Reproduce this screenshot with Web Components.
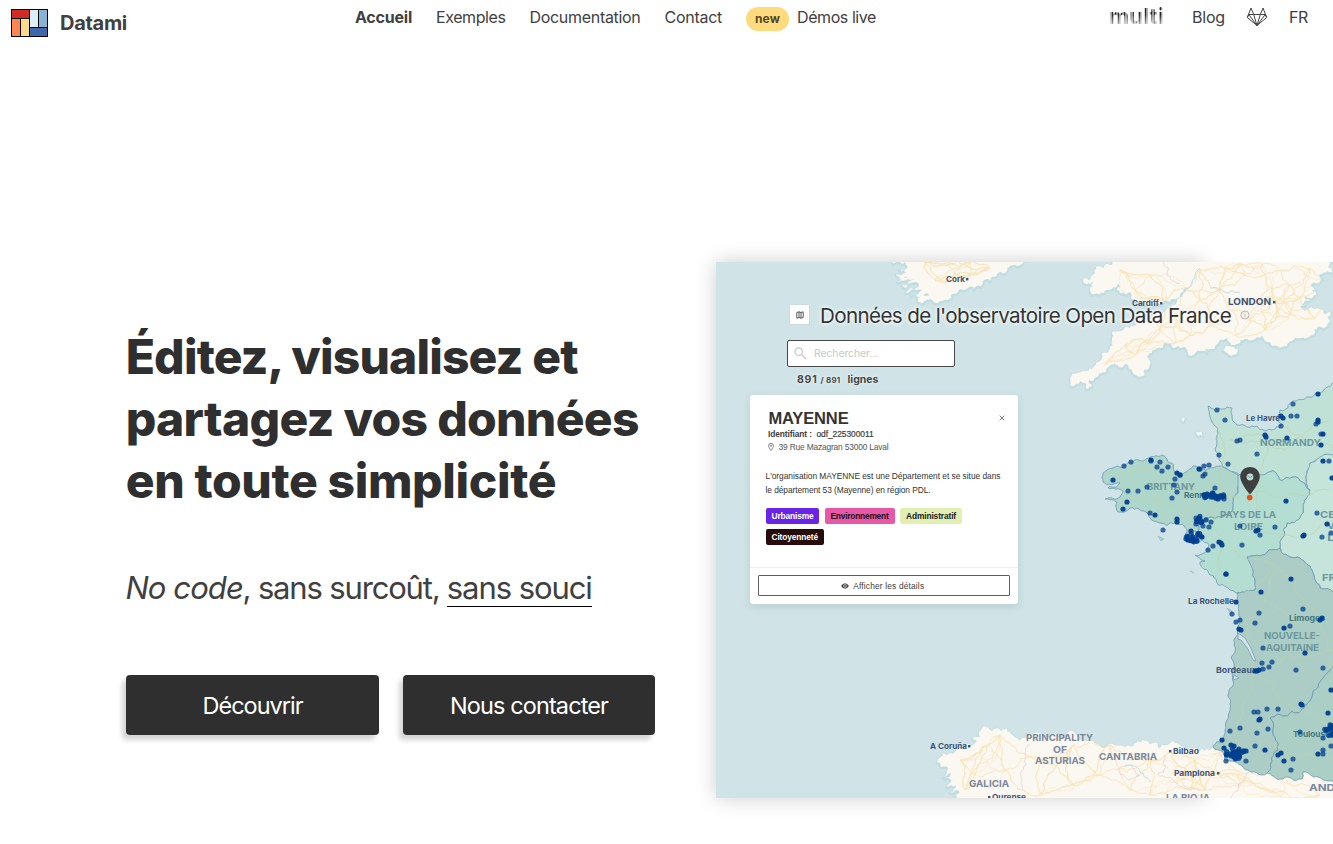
<!DOCTYPE html>
<html lang="fr">
<head>
<meta charset="utf-8">
<title>Datami</title>
<style>
html,body{margin:0;background:#fff;overflow:hidden}
body{font-family:Inter,"Liberation Sans",sans-serif;color:#404040;width:1333px;height:844px}
</style>
</head>
<body>
<datami-page></datami-page>
<script>
const define=(name,html,setup)=>customElements.define(name,class extends HTMLElement{
  connectedCallback(){
    if(this.shadowRoot)return;
    this.attachShadow({mode:'open'}).innerHTML=html;
    if(setup)setup(this,this.shadowRoot);
  }
});

/* Text tracked so that it fills a given width */
define('tracked-text',`<style>:host{display:inline-block;white-space:pre;text-align:left}span{display:inline-block}</style><span><slot></slot></span>`,(el,root)=>{
  const w=+el.getAttribute('w');
  const span=root.querySelector('span');
  const n=el.textContent.length;
  el.style.width=w+'px';
  span.style.letterSpacing=((w-span.getBoundingClientRect().width)/n).toFixed(3)+'px';
});

define('datami-logo',`<style>:host{display:flex;align-items:center;gap:12px;font-weight:700;font-size:20px;line-height:28px}svg{display:block}</style>
<svg width="37" height="28" viewBox="0 0 37 28" shape-rendering="crispEdges"><rect width="37" height="28"/>
<rect x="1" y="1" width="17" height="8" fill="#d12b26"/><rect x="1" y="10" width="8" height="17" fill="#fc8552"/><rect x="10" y="10" width="8" height="17" fill="#fedb89"/>
<rect x="19" y="1" width="8" height="17" fill="#dceef6"/><rect x="28" y="1" width="8" height="17" fill="#86b4d7"/><rect x="19" y="19" width="17" height="8" fill="#3d68ab"/></svg>
<tracked-text w="67">Datami</tracked-text>`);

define('nav-pill',`<style>:host{display:block;box-sizing:border-box;width:43px;height:24px;border-radius:12px;background:#ffdb7d;color:#524724;font-weight:700;font-size:12px;line-height:24px;padding-left:9px}</style><tracked-text w="25">new</tracked-text>`);

define('gitlab-icon',`<style>:host,svg{display:block}</style><svg width="22" height="20" viewBox="0 0 22 20" fill="none" stroke="#444" stroke-width="1" stroke-linejoin="round"><path d="M1.300 10.500 5 1 7.700 7.500H14.300L17 1 20.700 10.500 11 18.500Z"/><path d="M1.300 10.500 2.800 7.500H7.700L11 18.500 14.300 7.500H19.200L20.700 10.500M2.800 7.500 11 18.500 19.200 7.500"/></svg>`);

define('multi-logo',`<style>:host{display:block;width:56px;height:24px}
span{display:block;height:24px;font:700 22px/22px Inter,sans-serif;color:#222;-webkit-mask-image:repeating-linear-gradient(90deg,#000 0 1.500px,rgba(0,0,0,.45) 1.500px 3px),linear-gradient(#000 40%,rgba(0,0,0,.4) 80%);-webkit-mask-composite:source-in;mask-composite:intersect}</style><span><tracked-text w="55">multi</tracked-text></span>`);

define('site-nav',`<style>
:host{display:grid;grid-template-columns:355px 1fr auto;height:46px;font-size:16px;line-height:24px}
datami-logo{margin:9px 0 0 11px;align-self:start}
nav{display:flex;gap:24px;padding-top:5px;align-items:flex-start}
nav b{font-weight:700}
.new{display:flex;gap:8px}.new nav-pill{margin-top:2px}
.r{padding-right:25px;gap:21px}.r multi-logo{margin:0 6px 0 0}.r gitlab-icon{margin:2px 0 0}
</style>
<datami-logo></datami-logo>
<nav><b><tracked-text w="57">Accueil</tracked-text></b><tracked-text w="69.5">Exemples</tracked-text><tracked-text w="111">Documentation</tracked-text><tracked-text w="57.5">Contact</tracked-text>
<span class="new"><nav-pill></nav-pill><tracked-text w="79">Démos live</tracked-text></span></nav>
<nav class="r"><multi-logo></multi-logo><tracked-text w="33">Blog</tracked-text><gitlab-icon></gitlab-icon><tracked-text w="19">FR</tracked-text></nav>`);

define('action-button',`<style>:host{display:flex;align-items:center;justify-content:center;box-sizing:border-box;height:60px;padding:2px 0 0 0;border-radius:4px;background:#2f2f2f;color:#fff;font-size:23.5px;line-height:60px;box-shadow:-4px 5px 5px rgba(0,0,0,.17)}</style><slot></slot>`);

define('hero-copy',`<style>
:host{display:block;padding:280px 0 0 125.700px}
h1{margin:0;font-weight:800;font-size:48px;line-height:62px;color:#2f2f2f}
h1 tracked-text{display:block}
p{margin:51px 0 0;font-size:31px;line-height:50px;display:flex;color:#404040;white-space:pre;align-items:flex-start}
p i,p>tracked-text{margin-left:-.3px}
u{text-decoration:none;border-bottom:1px solid #000;line-height:41px;display:block;margin-top:3.500px;height:39px}
u tracked-text{margin-left:-.3px}
.b{display:grid;grid-template-columns:253px 252px;gap:24px;margin:62px 0 0 .3px}
</style>
<h1><tracked-text w="452">Éditez, visualisez et</tracked-text><tracked-text w="513">partagez vos données</tracked-text><tracked-text w="430.500">en toute simplicité</tracked-text></h1>
<p><i><tracked-text w="117.500">No code</tracked-text></i><tracked-text w="204.500">, sans surcoût, </tracked-text><u><tracked-text w="145">sans souci</tracked-text></u></p>
<div class="b"><action-button><tracked-text w="100">Découvrir</tracked-text></action-button><action-button><tracked-text w="158">Nous contacter</tracked-text></action-button></div>`);

/* Geographic drawing, in page-sized units */
define('geo-map',`<style>:host,svg{display:block}text{font-family:Inter,sans-serif}</style><svg width="617" height="536" viewBox="716 262 617 536"></svg>`,(el,root)=>{
  const hash=n=>{const s=Math.sin(n*12.9898)*43758.5453;return s-Math.floor(s)};
  const parse=s=>s.trim().split(/\s+/).map(p=>p.split(',').map(Number));
  const split=(a,b,k,depth)=>{
    if(!depth||Math.hypot(a[0]-b[0],a[1]-b[1])<3)return[b];
    const flip=a[0]+a[1]*1.7<b[0]+b[1]*1.7?1:-1;
    const r=(hash(a[0]*.7+b[0]*.7+(a[1]+b[1])*1.3)-.5)*k*flip;
    const m=[(a[0]+b[0])/2-(b[1]-a[1])*r,(a[1]+b[1])/2+(b[0]-a[0])*r];
    return[...split(a,m,k,depth-1),...split(m,b,k,depth-1)];
  };
  const line=(s,k,close)=>{
    const p=typeof s==='string'?parse(s):s,out=[p[0]];
    for(let i=1;i<p.length;i++)out.push(...split(p[i-1],p[i],k,4));
    return'M'+out.map(q=>q[0].toFixed(1)+','+q[1].toFixed(1)).join('L')+(close?'Z':'');
  };
  const lands={
    ireland:'893,258 893,264 905,262 908,267 899,270 906,273 896,274 908,278 897,282 915,279 902,285 905,288 919,285 906,293 922,290 911,296 929,295 918,302 930,299 936,303 940,301 948,300 952,294 958,292 960,289 968,288 974,289 977,286 983,284 984,280 990,281 997,276 998,273 1007,271 1010,266 1020,265 1045,258',
    britain:'1122,258 1110,265 1103,269 1096,267 1095,273 1083,279 1093,282 1091,285 1096,287 1090,289 1094,294 1104,293 1107,290 1112,289 1118,284 1117,290 1130,292 1131,297 1136,300 1143,302 1153,306 1163,303 1170,302 1173,299 1180,294 1185,288 1183,294 1177,302 1170,308 1163,313 1152,317 1137,318 1130,328 1120,331 1113,331 1112,340 1109,350 1098,362 1087,371 1077,373 1070,378 1070,385 1076,384 1080,381 1085,383 1087,389 1092,386 1089,380 1096,377 1103,372 1123,367 1126,364 1130,369 1135,375 1143,376 1149,368 1148,358 1152,353 1163,348 1180,348 1188,355 1207,353 1205,349 1212,349 1219,341 1227,338 1229,342 1235,345 1240,340 1253,340 1270,342 1287,346 1292,341 1300,338 1312,335 1314,330 1330,322 1331,310 1317,308 1303,309 1298,305 1306,303 1298,300 1310,300 1305,296 1316,295 1305,291 1315,290 1310,285 1323,279 1320,274 1332,272 1328,268 1334,258',
    wight:'1223,350 1230,346 1238,349 1231,356',
    spain:'958,802 955,795 959,791 950,792 956,785 947,787 954,781 945,779 951,773 943,777 948,769 937,763 940,757 944,753 953,754 962,748 973,745 977,741 972,738 980,737 979,732 988,727 992,731 997,728 1001,731 1007,729 1013,735 1027,737 1042,736 1058,737 1087,741 1095,743 1113,744 1133,746 1137,741 1147,741 1153,743 1167,745 1171,742 1177,743 1183,747 1190,748 1200,751 1213,746 1240,740 1340,750 1340,802',
    guernsey:'1181,420 1185,418 1184,422', jersey:'1196,433 1202,432 1203,436 1198,436'
  };
  const regions=[
    ['#c5e5da','1310,463 1335,451 1340,595 1333,592 1320,588 1313,573 1312,570 1300,558 1290,557 1280,548 1283,537 1287,523 1303,513 1307,497 1310,490 1306,476'],
    ['#bfe1d6','1208,406 1223,409 1227,407 1232,408 1232,415 1237,425 1257,426 1272,430 1282,425 1277,417 1280,410 1293,401 1317,393 1338,382 1340,452 1310,463 1306,476 1310,490 1293,477 1280,480 1272,471 1263,475 1237,473 1223,467 1219,457 1218,433 1210,417'],
    ['#aed6ca','1223,467 1210,468 1200,469 1193,466 1183,474 1176,473 1167,459 1162,455 1150,457 1143,461 1130,462 1113,468 1103,473 1103,482 1120,483 1108,488 1123,491 1120,497 1105,499 1117,503 1118,512 1130,508 1147,513 1160,523 1175,523 1187,530 1184,537 1198,532 1197,523 1207,518 1223,517 1233,507 1238,493 1238,475'],
    ['#b5ded3','1238,475 1263,475 1272,471 1280,480 1293,477 1310,490 1307,497 1303,513 1287,523 1283,537 1280,548 1267,552 1247,557 1253,570 1255,580 1255,590 1237,593 1230,590 1210,575 1200,562 1205,561 1195,555 1208,550 1208,543 1196,540 1198,532 1197,523 1207,518 1223,517 1233,507 1238,493'],
    ['#abcdc5','1247,557 1267,552 1280,548 1290,557 1300,558 1312,570 1313,573 1320,588 1333,592 1340,596 1340,665 1333,667 1327,673 1313,693 1300,712 1270,718 1273,730 1278,750 1272,757 1267,773 1257,773 1243,767 1225,760 1223,752 1213,747 1222,740 1225,730 1227,720 1230,704 1232,687 1234,667 1235,647 1238,630 1240,617 1237,603 1237,593 1255,590 1255,580 1253,570'],
    ['#abcfc5','1340,665 1333,667 1327,673 1313,693 1300,712 1270,718 1273,730 1278,750 1272,757 1267,773 1280,779 1302,779 1303,772 1318,777 1340,783']
  ];
  const nets=[
    '1120,270 1135,290 1150,275 1163,300 1185,288 1200,270 1220,290 1245,275 1260,300 1275,302 1290,285 1310,268 1325,280 1290,315 1315,318 1265,330 1235,335 1210,325 1190,335 1175,315 1150,340 1125,345 1105,365 1230,310 1200,300 1265,275 1250,320 1300,298 1280,270 1240,264 1225,268 1262,264 1272,288 1284,302 1262,312 1276,318 1135,355 1160,328 1175,343',
    '960,760 975,775 988,745 965,790 1005,770 1040,760 1073,785 1100,775 1130,790 1073,745 1000,735 1110,745 1170,752 1195,760 1180,780 1217,774 1240,785 1265,790 1150,760 1150,795 1220,752 1205,790 1285,792 1320,795 1040,795 1185,768 1200,775 1190,790',
    '925,262 945,282 967,278 990,268 970,262 935,280'
  ];
  let g='';
  const landPath=Object.values(lands).map(s=>line(s,.7,true)).join('');
  g+=`<rect x="716" y="262" width="617" height="536" fill="#d0e4e7"/><path d="${landPath}" transform="translate(0 1)" fill="none" stroke="#b5d8dd" stroke-width="3" stroke-linejoin="round" opacity=".6"/><path d="${landPath}" fill="#fbf7f1"/>`;
  g+=`<clipPath id="land"><path d="${landPath}"/></clipPath><g clip-path="url(#land)" fill="none">`;
  nets.forEach(s=>{
    const p=parse(s);
    p.forEach((a,i)=>{
      p.map((b,j)=>[Math.hypot(a[0]-b[0],a[1]-b[1]),j]).filter(q=>q[1]!==i).sort((x,y)=>x[0]-y[0]).slice(0,5).forEach(q=>{
        const seg=i<q[1]?[a,p[q[1]]]:[p[q[1]],a];
        g+=`<path d="${line(seg,.4)}" stroke="#fbe4b6" stroke-width="${q[1]%3?.5:.9}"/>`;
      });
    });
  });
  ['1163,262 1167,275 1180,283','1030,745 1026,765 1022,790','1130,765 1140,775 1128,780 1118,770 1130,765','1165,755 1158,775 1175,782 1200,790','1250,770 1238,785 1230,798'].forEach(s=>g+=`<path d="${line(s,.5)}" stroke="#e5cfd6" stroke-width=".7"/>`);
  ['1185,289 1195,278 1200,268','1210,288 1225,292 1240,293','1125,765 1140,772 1150,782'].forEach(s=>g+=`<path d="${line(s,.4)}" stroke="#bcdfe4" stroke-width="1"/>`);
  g+='</g>';
  regions.forEach(([c,s])=>g+=`<path d="${line(s,.38,true)}" fill="${c}" stroke="#6d97b5" stroke-width=".8" stroke-linejoin="round"/>`);
  ['1112,475 1150,468 1200,475 1240,497','1120,505 1160,500 1205,525 1225,545','1160,455 1150,487 1165,520','1205,497 1232,497 1285,497 1330,490','1222,468 1218,495 1225,543 1250,560 1290,580','1213,420 1225,450 1222,470','1265,436 1230,440 1285,450 1330,420','1265,436 1262,470 1256,500 1260,530','1225,543 1220,570 1245,592 1275,565','1283,425 1305,440 1333,450','1260,530 1285,535 1333,520','1256,671 1245,620 1275,570 1292,578 1320,618','1256,671 1290,655 1333,650','1256,671 1245,700 1235,745','1256,671 1280,700 1300,712 1333,735','1235,745 1265,740 1290,760 1333,760','1320,618 1330,665 1333,730','1262,600 1290,625 1320,618'].forEach(s=>g+=`<path d="${line(s,.3)}" fill="none" stroke="#bfd3ad" stroke-width=".9" opacity=".75"/>`);
  g+=`<path d="M1238,633L1245,638L1251,648L1256,661L1253,660L1248,649L1241,640L1238,639ZM1234,675l5,3l-6,2Z" fill="#d0e4e7" stroke="#6d97b5" stroke-width=".7"/>`;
  g+=`<path d="M1232,600l5,1l-2,2ZM1227,608l5,3l-1,3ZM1158,536l6,3l-3,2ZM1190,571l4,2Z" fill="#a9d0c8" stroke="#8bb5bf" stroke-width=".6"/>`;
  const T=(x,y,w,s,t,c)=>g+=`<text x="${x}" y="${y}" textLength="${w}" lengthAdjust="spacingAndGlyphs" font-size="${s}" font-weight="650" fill="${c}">${t}</text>`;
  const city='#3d5478',reg='#79879b',fr='#6d979d';
  T(946,282,19,7.5,'Cork',city);T(1132,306,27,7.5,'Cardiff',city);T(1228,305,43,9.5,'LONDON',city);
  T(1246,421,34,7.5,'Le Havre',city);T(1260,446,61,9.5,'NORMANDY',fr);T(1147,490,48,9.5,'BRITTANY',fr);T(1184,498,30,7.5,'Rennes','#437780');
  T(1220,518,56,9.5,'PAYS DE LA',fr);T(1234,530,29,9.5,'LOIRE',fr);T(1320,518,15,9.5,'CE',fr);T(1327,529,8,9.5,'V',fr);T(1327,541,8,9.5,'L',fr);T(1322,581,14,9.5,'FR',fr);
  T(1188,604,46,7.5,'La Rochelle',city);T(1289,621,36,7.5,'Limoges','#437780');T(1264,639,56,9.5,'NOUVELLE-',fr);T(1266,651,53,9.5,'AQUITAINE',fr);
  T(1216,673,41,7.5,'Bordeaux',city);T(1293,737,37,7.5,'Toulouse','#437780');
  T(930,749,37,7.5,'A Coruña',city);T(1026,741,67,9.5,'PRINCIPALITY',reg);T(1053,753,14,9.5,'OF',reg);T(1035,764,50,9.5,'ASTURIAS',reg);T(1099,760,58,9.5,'CANTABRIA',reg);
  T(969,787,40,9.5,'GALICIA',reg);T(1173,754,26,7.5,'Bilbao',city);T(1174,776,41,7.5,'Pamplona',city);T(992,800,34,7.5,'Ourense',city);T(1166,801,44,9.5,'LA RIOJA',reg);T(1309,791,26,9.5,'AND',reg);
  [[967,279],[1161,303],[1274,302],[969,746],[1170,751],[1218,773],[989,797]].forEach(([x,y])=>g+=`<rect x="${x-1}" y="${y-1}" width="2.4" height="2.4" fill="${city}"/>`);
  const soft='1217,410 1225,420 1219,455 1228,464 1237,441 1240,440 1257,454 1293,404 1291,416 1297,416 1281,426 1316,424 1321,434 1329,461 1124,466 1131,462 1151,461 1160,462 1157,467 1168,467 1162,471 1180,475 1175,479 1174,485 1177,492 1172,498 1128,491 1138,491 1147,487 1200,469 1204,466 1209,465 1203,476 1205,474 1215,488 1224,499 1150,513 1163,530 1196,518 1196,524 1203,526 1211,522 1209,527 1213,546 1208,550 1242,545 1240,526 1260,535 1275,527 1317,513 1322,537 1331,533 1232,614 1236,622 1240,620 1255,623 1259,613 1303,609 1290,626 1263,648 1262,663 1263,669 1269,667 1272,662 1296,670 1323,668 1254,712 1258,712 1267,709 1278,709 1230,731 1240,728 1257,733 1268,729 1255,746 1226,761 1246,761 1300,732 1293,759 1291,770 1323,750 1323,754 1331,746 1323,738';
  const hard='1318,394 1281,416 1283,418 1318,420 1318,422 1323,461 1323,434 1321,445 1265,435 1266,437 1287,438 1151,460 1177,473 1180,475 1199,469 1113,480 1127,502 1123,509 1155,515 1177,519 1177,522 1204,495 1207,494 1210,495 1216,496 1218,499 1221,496 1217,497 1213,497 1199,518 1202,522 1198,521 1286,501 1327,524 1258,530 1256,531 1303,536 1304,535 1219,542 1222,545 1221,543 1226,574 1332,478 1191,531 1188,540 1193,541 1198,535 1202,537 1226,574 1291,579 1261,592 1236,602 1239,629 1241,630 1284,628 1320,620 1322,618 1305,653 1255,671 1257,671 1259,670 1331,690 1301,704 1302,705 1328,713 1330,728 1332,735 1259,720 1260,719 1222,740 1224,748 1231,745 1234,746 1236,752 1234,757 1239,751 1246,751 1265,750 1281,753 1284,761 1278,755 1318,754';
  const D=(s,o)=>parse(s).forEach(([x,y])=>g+=`<circle cx="${x}" cy="${y}" r="2.6" fill="#003f8f" opacity="${o}"/>`);
  D(soft,.75);D(hard,.95);
  const cluster=(cx,cy,rx,ry,n)=>{for(let i=0;i<n;i++){const a=hash(cx+i)*6.28,r=Math.sqrt(hash(cy+i*3));D((cx+Math.cos(a)*rx*r)+','+(cy+Math.sin(a)*ry*r),.85)}};
  cluster(1193,537,9,6,18);cluster(1202,520,6,4,8);cluster(1208,495,7,3,8);cluster(1218,496,6,3,8);cluster(1234,752,10,5,20);cluster(1237,756,5,3,8);cluster(1330,732,6,9,14);
  g+=`<path d="M1250,467c-5.600,0-9.800,4.100-9.800,9.600c0,7,9.800,18,9.800,18s9.800-11,9.800-18c0-5.500-4.200-9.600-9.800-9.600z" fill="#3f3f3f"/><circle cx="1250" cy="477" r="3.4" fill="#b9ded4"/><path d="M1247.500,475.500l2.500,2l2.500-1.500" stroke="#6f9eae" fill="none"/><circle cx="1249.700" cy="497.600" r="2.8" fill="#e8500f"/>`;
  root.querySelector('svg').innerHTML=g;
});

define('tag-chip',`<style>:host{display:block;box-sizing:border-box;height:16px;border-radius:2px;padding-left:6px;font:bold 8.4px/16px "Liberation Sans",sans-serif}tracked-text{display:block}</style><slot></slot>`,(el)=>{
  el.style.background=el.getAttribute('bg');el.style.color=el.getAttribute('fg');el.style.width=el.getAttribute('size')+'px';
});

define('place-card',`<style>
:host{display:flex;flex-direction:column;box-sizing:border-box;width:268px;height:209px;background:#fff;border-radius:3px;box-shadow:0 3px 8px rgba(40,70,80,.13);font-family:"Liberation Sans",sans-serif;font-size:8.4px;color:#404040}
.top{display:flex;justify-content:space-between;padding:12px 13px 0 18.500px;height:22px;align-items:center}
.top b{font-size:16.5px;line-height:20px;color:#333}.top svg{margin-top:-1px}
.id{padding-left:18px;display:flex;gap:4.500px;line-height:11px}
.id .v{-webkit-text-stroke:.2px}
.ad{padding:2px 0 0 18px;display:flex;gap:4.500px;line-height:11px;color:#555}
.d{padding:17px 0 0 15.500px;line-height:13.500px;color:#333}.d tracked-text{display:block}
.tags{display:flex;flex-wrap:wrap;gap:5px 5.500px;padding:10.500px 0 0 15.500px;width:225px}
.ft{margin-top:auto;border-top:1px solid #eee;height:37px;box-sizing:border-box;padding:7px 8px 0 7.500px}
.btn{display:flex;align-items:center;justify-content:center;gap:4px;border:1px solid #606060;border-radius:1px;height:19px;padding-right:2px;color:#404040}
</style>
<div class="top"><b><tracked-text w="80">MAYENNE</tracked-text></b><svg width="6" height="6" viewBox="0 0 6 6" stroke="#666" stroke-width=".9"><path d="M.7.7 5.300 5.300M5.300.7.7 5.300"/></svg></div>
<div class="id"><b><tracked-text w="44">Identifiant :</tracked-text></b><tracked-text class="v" w="57">odf_225300011</tracked-text></div>
<div class="ad"><svg width="6" height="10" viewBox="0 0 6 10" fill="none" stroke="#666" stroke-width=".8"><path d="M3 8.500C1.500 6.500.6 5 .6 3.700A2.400 2.400 0 0 1 5.400 3.700C5.400 5 4.500 6.500 3 8.500Z"/><circle cx="3" cy="3.700" r=".7"/></svg><tracked-text w="110">39 Rue Mazagran 53000 Laval</tracked-text></div>
<div class="d"><tracked-text w="235">L'organisation MAYENNE est une Département et se situe dans</tracked-text><tracked-text w="165">le département 53 (Mayenne) en région PDL.</tracked-text></div>
<div class="tags"><tag-chip bg="#6a24e8" fg="#fff" size="53.5"><tracked-text w="42">Urbanisme</tracked-text></tag-chip><tag-chip bg="#e957a7" fg="#241019" size="70"><tracked-text w="58">Environnement</tracked-text></tag-chip><tag-chip bg="#e2efb2" fg="#222" size="62"><tracked-text w="50">Administratif</tracked-text></tag-chip><tag-chip bg="#280c0c" fg="#fff" size="58.5"><tracked-text w="46.5">Citoyenneté</tracked-text></tag-chip></div>
<div class="ft"><div class="btn"><svg width="8" height="6" viewBox="0 0 8 6"><path d="M0 3Q4-2.500 8 3Q4 8.500 0 3Z" fill="#444"/><circle cx="4" cy="3" r="1.4" fill="none" stroke="#fff" stroke-width=".6"/></svg><tracked-text w="71">Afficher les détails</tracked-text></div></div>`);

define('map-tools',`<style>
:host{display:block;padding:42px 0 0 34px;color:#333}
.t{display:flex;align-items:center;padding-left:40px;height:22px;text-shadow:0 0 4px #fff,0 0 3px #fff}
.ic{width:19px;height:19px;background:#fff;box-shadow:0 0 1px #aaa;display:grid;place-items:center;margin:-1px 11px 0 0}
.t tracked-text{font-size:20.6px;line-height:22px;margin-top:1px}.t .i{margin-left:9px}
.s{display:flex;align-items:center;box-sizing:border-box;width:167.500px;height:27px;border:1px solid #484848;border-radius:2px;background:#fff;margin:14px 0 0 37px;padding-left:6px;gap:7px;font-size:10.5px;color:#c9c9c9}
.n{display:flex;align-items:baseline;margin:4px 0 0 47px;height:17px;line-height:17px;font-size:10.500px;font-weight:700;color:#484848;text-shadow:0 0 3px #fff}
.n small{font-size:8px;margin:0 7px 0 3px}
place-card{margin-top:7px}
</style>
<div class="t"><span class="ic"><svg width="8" height="8" viewBox="0 0 8 8" fill="none" stroke="#333" stroke-width=".8"><path d="M.8 1.500 3 .8 5 1.500 7.200.8V6.500L5 7.200 3 6.500.8 7.200ZM3 .8V6.500M5 1.500V7.200"/></svg></span><tracked-text w="411">Données de l'observatoire Open Data France</tracked-text>
<svg class="i" width="10" height="10" viewBox="0 0 10 10" fill="none" stroke="#aaa" stroke-width=".8"><circle cx="5" cy="5" r="4"/><path d="M5 4.300V7.300M5 2.500V3.300"/></svg></div>
<div class="s"><svg width="13" height="13" viewBox="0 0 13 13" fill="none" stroke="#ccc" stroke-width="1.4"><circle cx="4.7" cy="4.7" r="3.7"/><path d="M7.500 7.500 12 12"/></svg><tracked-text w="64">Rechercher...</tracked-text></div>
<div class="n"><tracked-text w="20.500">891</tracked-text><small><tracked-text w="20">/ 891</tracked-text></small><tracked-text w="31">lignes</tracked-text></div>
<place-card></place-card>`);

define('map-preview',`<style>
:host{display:grid;grid-template:536px / 617px}
.sh,geo-map,map-tools{grid-area:1/1}
.sh{width:488px;box-shadow:0 0 20px rgba(0,0,0,.2)}
</style><div class="sh"></div><geo-map></geo-map><map-tools></map-tools>`);

define('datami-page',`<style>
:host{display:block;width:1333px;height:844px;overflow:hidden}
main{display:grid;grid-template-columns:716px 617px;align-items:start}
map-preview{margin-top:216px}
</style><site-nav></site-nav><main><hero-copy></hero-copy><map-preview></map-preview></main>`);
</script>
</body>
</html>
